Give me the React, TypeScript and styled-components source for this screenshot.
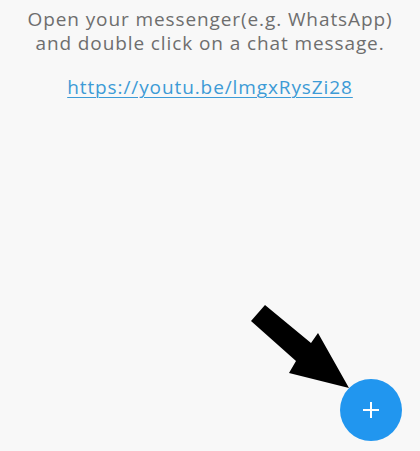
import React from "react";
import styled, { createGlobalStyle } from "styled-components";

const GlobalStyle = createGlobalStyle`
  html, body {
    margin: 0;
    padding: 0;
    background: #f8f8f8;
  }
  #root {
    min-height: 100vh;
  }
`;

const Screen = styled.div`
  position: relative;
  width: 420px;
  height: 451px;
  overflow: hidden;
  background: #f8f8f8;
  font-family: "Open Sans", "Liberation Sans", sans-serif;
`;

const Intro = styled.div`
  display: flex;
  flex-direction: column;
  align-items: center;
  padding-top: 7px;
  text-align: center;
`;

const Hint = styled.p`
  margin: 0;
  font-size: 19px;
  line-height: 24px;
  color: #6e6e6e;
  letter-spacing: 0.9px;
`;

const VideoLink = styled.a`
  margin-top: 20px;
  font-size: 19px;
  line-height: 24px;
  color: #3d9bd6;
  letter-spacing: 0.9px;
  text-decoration: underline;
  text-underline-offset: 3px;
  text-decoration-thickness: 1px;
`;

const Pointer = styled.svg`
  position: absolute;
  left: 245px;
  top: 300px;
  width: 110px;
  height: 95px;
`;

const Fab = styled.button`
  position: absolute;
  left: 340px;
  top: 379px;
  width: 62px;
  height: 62px;
  border: none;
  border-radius: 50%;
  background: #2196ef;
  display: flex;
  align-items: center;
  justify-content: center;
  padding: 0;
  cursor: pointer;
`;

export default function App() {
  return (
    <Screen>
      <GlobalStyle />
      <Intro>
        <Hint>
          Open your messenger(e.g. WhatsApp)
          <br />
          and double click on a chat message.
        </Hint>
        <VideoLink href="#">https://youtu.be/lmgxRysZi28</VideoLink>
      </Intro>
      <Pointer viewBox="245 300 110 95">
        <polygon
          points="265,305 251,321 296,361 289,373 349,388 318,333 311,343"
          fill="#000"
        />
      </Pointer>
      <Fab aria-label="add">
        <svg width="18" height="18" viewBox="0 0 18 18">
          <path d="M9 1v16M1 9h16" stroke="#fff" strokeWidth="2" />
        </svg>
      </Fab>
    </Screen>
  );
}
